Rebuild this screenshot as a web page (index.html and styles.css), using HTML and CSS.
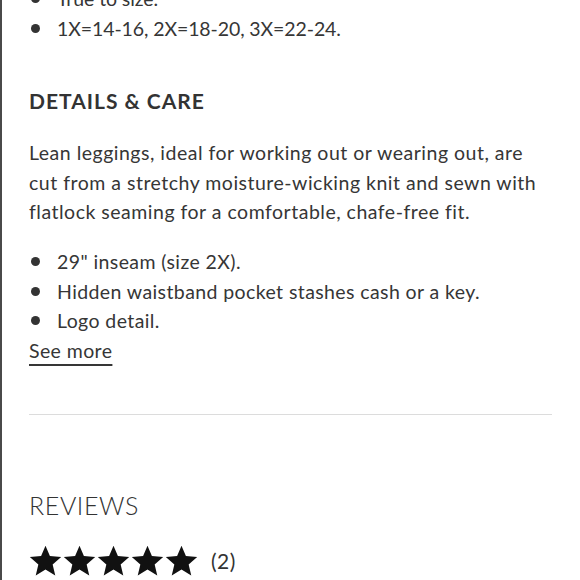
FILE: index.html
```html
<!DOCTYPE html>
<html lang="en">
<head>
<meta charset="utf-8">
<title>Details &amp; Care</title>
<link rel="stylesheet" href="styles.css">
</head>
<body>
<div class="page">
  <ul class="bullets first">
    <li>True to size.</li>
    <li>1X=14-16, 2X=18-20, 3X=22-24.</li>
  </ul>
  <h2 class="heading">DETAILS &amp; CARE</h2>
  <p class="desc">Lean leggings, ideal for working out or wearing out, are cut from a stretchy moisture-wicking knit and sewn with flatlock seaming for a comfortable, chafe-free fit.</p>
  <ul class="bullets">
    <li>29" inseam (size 2X).</li>
    <li>Hidden waistband pocket stashes cash or a key.</li>
    <li>Logo detail.</li>
  </ul>
  <a class="more" href="#">See more</a>
  <div class="divider"></div>
  <h2 class="reviews">REVIEWS</h2>
  <div class="rating">
    <div class="stars">
      <svg viewBox="0 0 24 24" class="star"><path d="M12 1.2l3.2 7.6 8.2.7-6.2 5.4 1.9 8L12 18.6l-7.1 4.3 1.9-8L.6 9.5l8.2-.7z"/></svg>
      <svg viewBox="0 0 24 24" class="star"><path d="M12 1.2l3.2 7.6 8.2.7-6.2 5.4 1.9 8L12 18.6l-7.1 4.3 1.9-8L.6 9.5l8.2-.7z"/></svg>
      <svg viewBox="0 0 24 24" class="star"><path d="M12 1.2l3.2 7.6 8.2.7-6.2 5.4 1.9 8L12 18.6l-7.1 4.3 1.9-8L.6 9.5l8.2-.7z"/></svg>
      <svg viewBox="0 0 24 24" class="star"><path d="M12 1.2l3.2 7.6 8.2.7-6.2 5.4 1.9 8L12 18.6l-7.1 4.3 1.9-8L.6 9.5l8.2-.7z"/></svg>
      <svg viewBox="0 0 24 24" class="star"><path d="M12 1.2l3.2 7.6 8.2.7-6.2 5.4 1.9 8L12 18.6l-7.1 4.3 1.9-8L.6 9.5l8.2-.7z"/></svg>
    </div>
    <span class="count">(2)</span>
  </div>
</div>
</body>
</html>
```
FILE: styles.css
```css
html, body {
  margin: 0;
  padding: 0;
  background: #fff;
  overflow: hidden;
}
body {
  font-family: Lato, "Open Sans", sans-serif;
  color: #363636;
  border-left: 2px solid #4a4a4a;
  min-height: 580px;
  box-sizing: border-box;
}
.page {
  padding: 0 28px 0 27px;
}
.bullets {
  list-style: none;
  margin: 0;
  padding: 0;
  font-size: 19.5px;
  line-height: 29.5px;
  letter-spacing: 0.4px;
}
.bullets li {
  display: flex;
  align-items: center;
}
.bullets li::before {
  content: "";
  width: 9px;
  height: 9px;
  border-radius: 50%;
  background: #333;
  margin: 0 17px 0 2px;
  flex: none;
}
.first {
  margin-top: -16px;
  letter-spacing: -0.1px;
}
.heading {
  margin: 46px 0 0;
  font-size: 21px;
  line-height: 24px;
  font-weight: 700;
  color: #333;
  letter-spacing: 1px;
}
.desc {
  margin: 25px 0 0;
  max-width: 512px;
  font-size: 19.5px;
  line-height: 29.5px;
  letter-spacing: 0.5px;
}
.desc + .bullets {
  margin-top: 20.5px;
}
.more {
  display: inline-block;
  font-size: 19.5px;
  line-height: 29.5px;
  letter-spacing: 0.4px;
  color: #363636;
  text-decoration: underline;
  text-decoration-thickness: 1.5px;
  text-underline-offset: 6px;
}
.divider {
  margin-top: 49px;
  border-top: 1px solid #dcdcdc;
}
.reviews {
  margin: 75px 0 0;
  font-size: 25px;
  line-height: 30px;
  font-weight: 300;
  color: #333;
  letter-spacing: 0.6px;
}
.rating {
  display: flex;
  align-items: center;
  margin-top: 24px;
}
.stars {
  display: flex;
  gap: 1px;
}
.star {
  width: 33px;
  height: 33px;
  fill: #111;
}
.count {
  margin-left: 13px;
  font-size: 21px;
  color: #333;
  letter-spacing: 0.5px;
}
```
